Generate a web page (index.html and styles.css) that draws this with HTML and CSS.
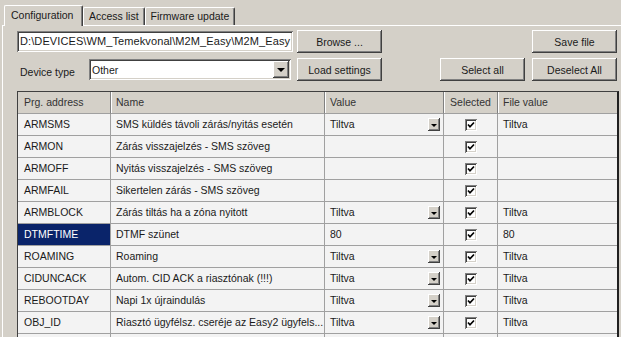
FILE: index.html
```html
<!DOCTYPE html>
<html lang="hu">
<head>
    <meta charset="UTF-8">
    <title>M2M Easy - Configuration</title>
    <link rel="stylesheet" href="styles.css">
</head>
<body>
    <div class="tabs">
        <div class="tab active">Configuration</div>
        <div class="tab">Access list</div>
        <div class="tab">Firmware update</div>
    </div>
    <div class="page">
        <div class="toolbar">
            <div class="bar">
                <div class="field path">D:\DEVICES\WM_Temekvonal\M2M_Easy\M2M_Easy</div>
                <button class="btn">Browse ...</button>
                <div class="spacer"></div>
                <button class="btn">Save file</button>
            </div>
            <div class="bar">
                <label class="label">Device type</label>
                <div class="field combo">
                    <span class="combo-text">Other</span>
                    <span class="drop big"></span>
                </div>
                <button class="btn">Load settings</button>
                <div class="spacer"></div>
                <button class="btn sel">Select all</button>
                <button class="btn">Deselect All</button>
            </div>
        </div>

        <div class="grid">
            <div class="grid-head">
                <div class="cell c1">Prg. address</div>
                <div class="cell c2">Name</div>
                <div class="cell c3">Value</div>
                <div class="cell c4 center">Selected</div>
                <div class="cell c5">File value</div>
            </div>
            <div class="grid-row">
                <div class="cell c1">ARMSMS</div>
                <div class="cell c2">SMS küldés távoli zárás/nyitás esetén</div>
                <div class="cell c3"><span>Tiltva</span><span class="drop"></span></div>
                <div class="cell c4"><span class="check"><svg viewBox="0 0 12 12"><polyline points="3,5.5 5,7.8 9,3.5"/></svg></span></div>
                <div class="cell c5">Tiltva</div>
            </div>
            <div class="grid-row">
                <div class="cell c1">ARMON</div>
                <div class="cell c2">Zárás visszajelzés - SMS szöveg</div>
                <div class="cell c3"></div>
                <div class="cell c4"><span class="check"><svg viewBox="0 0 12 12"><polyline points="3,5.5 5,7.8 9,3.5"/></svg></span></div>
                <div class="cell c5"></div>
            </div>
            <div class="grid-row">
                <div class="cell c1">ARMOFF</div>
                <div class="cell c2">Nyitás visszajelzés - SMS szöveg</div>
                <div class="cell c3"></div>
                <div class="cell c4"><span class="check"><svg viewBox="0 0 12 12"><polyline points="3,5.5 5,7.8 9,3.5"/></svg></span></div>
                <div class="cell c5"></div>
            </div>
            <div class="grid-row">
                <div class="cell c1">ARMFAIL</div>
                <div class="cell c2">Sikertelen zárás - SMS szöveg</div>
                <div class="cell c3"></div>
                <div class="cell c4"><span class="check"><svg viewBox="0 0 12 12"><polyline points="3,5.5 5,7.8 9,3.5"/></svg></span></div>
                <div class="cell c5"></div>
            </div>
            <div class="grid-row">
                <div class="cell c1">ARMBLOCK</div>
                <div class="cell c2">Zárás tiltás ha a zóna nyitott</div>
                <div class="cell c3"><span>Tiltva</span><span class="drop"></span></div>
                <div class="cell c4"><span class="check"><svg viewBox="0 0 12 12"><polyline points="3,5.5 5,7.8 9,3.5"/></svg></span></div>
                <div class="cell c5">Tiltva</div>
            </div>
            <div class="grid-row">
                <div class="cell c1 selected">DTMFTIME</div>
                <div class="cell c2">DTMF szünet</div>
                <div class="cell c3">80</div>
                <div class="cell c4"><span class="check"><svg viewBox="0 0 12 12"><polyline points="3,5.5 5,7.8 9,3.5"/></svg></span></div>
                <div class="cell c5">80</div>
            </div>
            <div class="grid-row">
                <div class="cell c1">ROAMING</div>
                <div class="cell c2">Roaming</div>
                <div class="cell c3"><span>Tiltva</span><span class="drop"></span></div>
                <div class="cell c4"><span class="check"><svg viewBox="0 0 12 12"><polyline points="3,5.5 5,7.8 9,3.5"/></svg></span></div>
                <div class="cell c5">Tiltva</div>
            </div>
            <div class="grid-row">
                <div class="cell c1">CIDUNCACK</div>
                <div class="cell c2">Autom. CID ACK a riasztónak (!!!)</div>
                <div class="cell c3"><span>Tiltva</span><span class="drop"></span></div>
                <div class="cell c4"><span class="check"><svg viewBox="0 0 12 12"><polyline points="3,5.5 5,7.8 9,3.5"/></svg></span></div>
                <div class="cell c5">Tiltva</div>
            </div>
            <div class="grid-row">
                <div class="cell c1">REBOOTDAY</div>
                <div class="cell c2">Napi 1x újraindulás</div>
                <div class="cell c3"><span>Tiltva</span><span class="drop"></span></div>
                <div class="cell c4"><span class="check"><svg viewBox="0 0 12 12"><polyline points="3,5.5 5,7.8 9,3.5"/></svg></span></div>
                <div class="cell c5">Tiltva</div>
            </div>
            <div class="grid-row">
                <div class="cell c1">OBJ_ID</div>
                <div class="cell c2">Riasztó ügyfélsz. cseréje az Easy2 ügyfels...</div>
                <div class="cell c3"><span>Tiltva</span><span class="drop"></span></div>
                <div class="cell c4"><span class="check"><svg viewBox="0 0 12 12"><polyline points="3,5.5 5,7.8 9,3.5"/></svg></span></div>
                <div class="cell c5">Tiltva</div>
            </div>
            <div class="grid-row">
                <div class="cell c1"></div>
                <div class="cell c2"></div>
                <div class="cell c3"><span></span><span class="drop"></span></div>
                <div class="cell c4"></div>
                <div class="cell c5"></div>
            </div>
        </div>
    </div>
</body>
</html>
```

FILE: styles.css
```css
html, body {
    margin: 0;
    padding: 0;
    height: 337px;
    overflow: hidden;
}
body {
    background-color: #d4d0c8;
    font-family: "Liberation Sans", Arial, sans-serif;
    font-size: 10.5px;
    color: #1a1a1a;
}

/* tab strip */
.tabs {
    display: flex;
    align-items: flex-end;
    height: 25px;
    padding-left: 4px;
}
.tab {
    height: 17px;
    line-height: 16px;
    padding: 0 5px;
    border-top: 1px solid #fff;
    border-left: 1px solid #fff;
    border-right: 1px solid #404040;
    box-shadow: inset -1px 0 #808080;
    border-radius: 2px 2px 0 0;
    background-color: #d4d0c8;
    white-space: nowrap;
}
.tab.active {
    position: relative;
    z-index: 1;
    height: 20px;
    line-height: 19px;
    margin-bottom: -1px;
    width: 66px;
    padding: 0 5px 0 6px;
}

/* tab page */
.page {
    margin-left: 2px;
    border-top: 1px solid #fff;
    border-left: 1px solid #fff;
    padding: 4px 4px 0 14px;
}
.toolbar {
    display: flex;
    flex-direction: column;
    gap: 5px;
}
.bar {
    display: flex;
    align-items: center;
    height: 23px;
}
.spacer {
    flex: 1;
}
.btn {
    height: 23px;
    width: 85px;
    margin-left: 4px;
    padding: 0;
    border: none;
    background-color: #d4d0c8;
    font-family: inherit;
    font-size: 10.5px;
    color: #1a1a1a;
    box-shadow: inset -1px -1px #404040, inset 1px 1px #fff, inset -2px -2px #808080, inset 2px 2px #d4d0c8;
}
.btn.sel {
    margin-right: 3px;
}
.field {
    box-sizing: border-box;
    height: 21px;
    background-color: #fff;
    box-shadow: inset 1px 1px #808080, inset -1px -1px #fff, inset 2px 2px #404040, inset -2px -2px #d4d0c8;
}
.path {
    width: 276px;
    padding: 0 2px 0 3px;
    line-height: 21px;
    font-size: 11px;
    letter-spacing: 0.1px;
    white-space: nowrap;
    overflow: hidden;
}
.label {
    width: 69px;
    padding-left: 3px;
    padding-top: 5px;
}
.combo {
    width: 202px;
    display: flex;
    align-items: center;
    justify-content: space-between;
    padding: 0 2px 0 3px;
    margin-right: 2px;
}

/* small combo button */
.drop {
    box-sizing: border-box;
    display: flex;
    align-items: center;
    justify-content: center;
    width: 12px;
    height: 13px;
    margin-right: 3px;
    background-color: #d4d0c8;
    box-shadow: inset -1px -1px #404040, inset 1px 1px #fff, inset -2px -2px #808080;
}
.drop::after {
    content: "";
    border-left: 3px solid transparent;
    border-right: 3px solid transparent;
    border-top: 3px solid #000;
    margin-top: 1px;
}
.drop.big {
    width: 16px;
    height: 17px;
    margin-right: 0;
}
.drop.big::after {
    border-left-width: 4px;
    border-right-width: 4px;
    border-top-width: 4px;
}

/* grid */
.grid {
    margin-top: 10px;
    width: 599px;
    border-top: 1px solid #404040;
    border-left: 1px solid #404040;
    border-right: 2px solid #202020;
    background-color: #f3f3f3;
}
.grid-head, .grid-row {
    display: flex;
    height: 22px;
}
.cell {
    box-sizing: border-box;
    height: 22px;
    line-height: 21px;
    padding: 0 5px;
    border-right: 1px solid #a0a0a0;
    border-bottom: 1px solid #a0a0a0;
    white-space: nowrap;
    overflow: hidden;
}
.grid-head .cell {
    background-color: #d4d0c8;
    color: #333;
    border-right-color: #808080;
    box-shadow: inset 1px 0 #fff;
}
.grid-head .c1 {
    box-shadow: none;
}
.c1 { width: 93px; padding-left: 6px; }
.c2 { width: 214px; }
.c3 {
    width: 119px;
    display: flex;
    align-items: center;
    justify-content: space-between;
    padding-right: 0;
}
.c4 {
    width: 54px;
    display: flex;
    align-items: center;
    justify-content: center;
}
.grid-head .c3 { display: block; }
.grid-head .c4 { display: block; text-align: center; padding: 0; }
.c5 { flex: 1; border-right: none; }
.selected {
    background-color: #0a246a;
    color: #fff;
}

/* checkbox */
.check {
    box-sizing: border-box;
    width: 12px;
    height: 12px;
    background-color: #fff;
    box-shadow: inset 1px 1px #808080, inset -1px -1px #fff, inset 2px 2px #404040, inset -2px -2px #d4d0c8;
    margin-left: 1px;
}
.check svg {
    display: block;
    width: 12px;
    height: 12px;
}
.check polyline {
    fill: none;
    stroke: #000;
    stroke-width: 1.7;
}
```
